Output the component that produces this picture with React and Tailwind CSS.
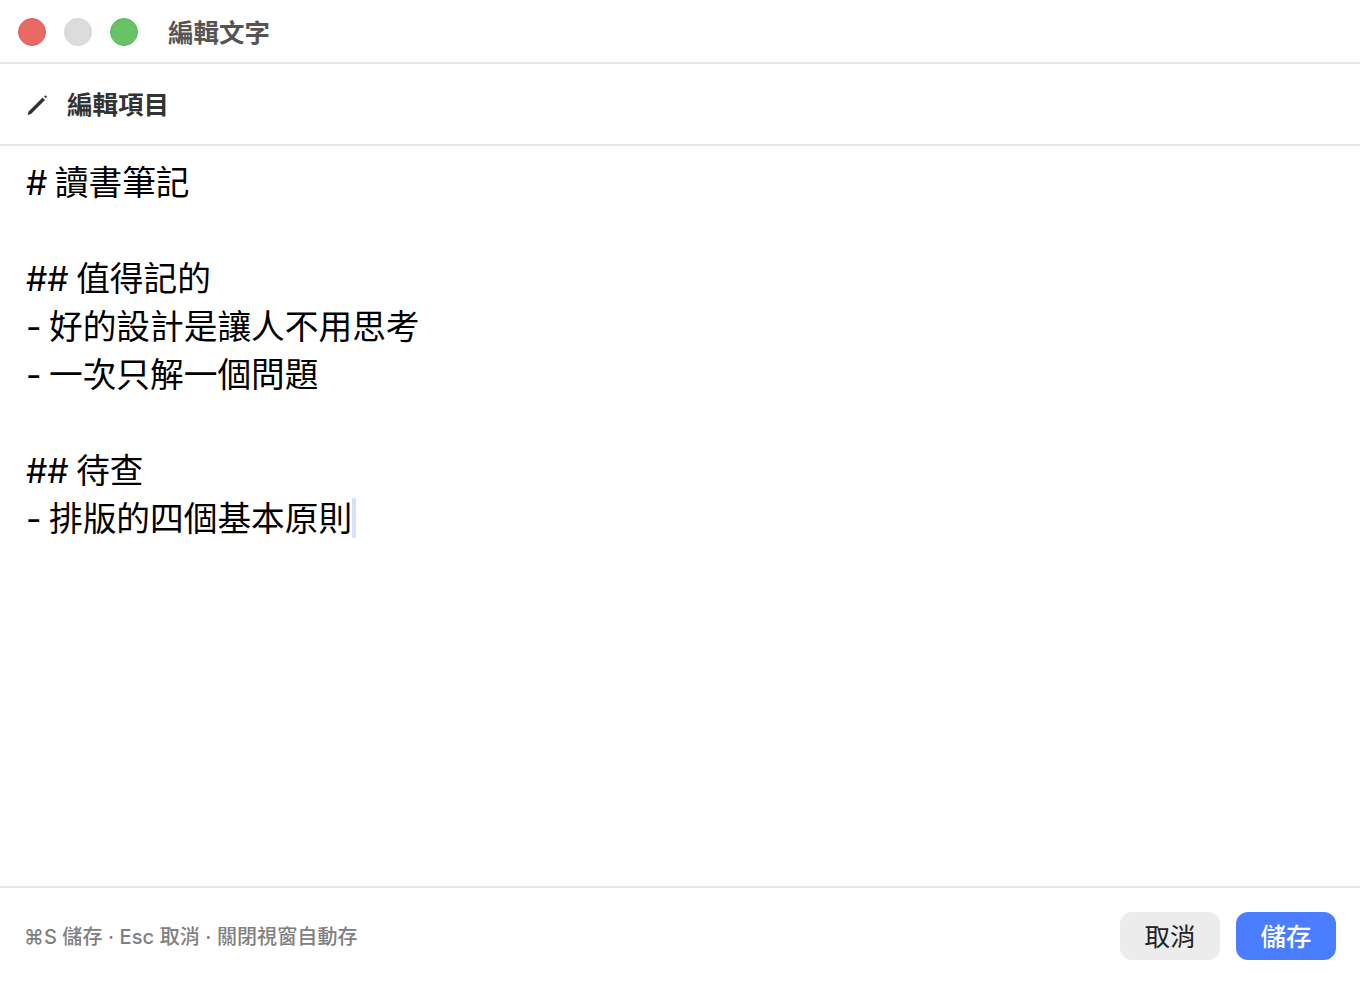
const FONT = "font-['Inter','Noto_Sans_CJK_TC',sans-serif]";

const lines = [
  "# 讀書筆記",
  "",
  "## 值得記的",
  "- 好的設計是讓人不用思考",
  "- 一次只解一個問題",
  "",
  "## 待查",
];

function PencilIcon() {
  return (
    <svg width="24" height="24" viewBox="0 0 24 24" fill="none" className="mt-[2px]">
      <path d="M2.5 22 L3.6 18.4 L17.6 4.6 L20 7 L6 20.9 Z" fill="#333333" />
      <path d="M19 3.4 L20.4 2.2 L22 3.8 L20.9 5.2 Z" fill="#333333" />
    </svg>
  );
}

export default function App() {
  return (
    <div className={`h-[984px] w-[1360px] flex flex-col bg-white overflow-hidden ${FONT}`}>
      {/* barra de título */}
      <div className="h-[64px] shrink-0 flex items-center border-b-2 border-[#e6e6e6] pl-[18px] pt-[2px]">
        <div className="flex gap-[18px]">
          <span className="w-[28px] h-[28px] rounded-full bg-[#e96a65] border border-[#de5f5a]" />
          <span className="w-[28px] h-[28px] rounded-full bg-[#dcdcdc] border border-[#d4d4d4]" />
          <span className="w-[28px] h-[28px] rounded-full bg-[#66c466] border border-[#5cb85c]" />
        </div>
        <span className="ml-[30px] pt-[2px] text-[25.5px] font-bold text-[#555555]">編輯文字</span>
      </div>

      {/* encabezado */}
      <div className="h-[82px] shrink-0 flex items-center border-b-2 border-[#e6e6e6] pl-[25px]">
        <PencilIcon />
        <span className="ml-[18px] pt-[2px] text-[25.5px] font-bold text-[#333333]">編輯項目</span>
      </div>

      {/* editor */}
      <div className="flex-1 pt-[12px] pl-[26px] text-[33.7px] leading-[50px] text-black [word-spacing:-2px]">
        {lines.map((line, i) => (
          <div key={i} className="h-[48px] whitespace-pre">
            {line}
          </div>
        ))}
        <div className="h-[48px] flex items-start whitespace-pre">
          - 排版的四個基本原則
          <span className="mt-[4px] w-[4px] h-[40px] bg-[#d5e0fb] rounded-[1px]" />
        </div>
      </div>

      {/* pie */}
      <div className="h-[98px] shrink-0 flex items-center justify-between border-t-2 border-[#e6e6e6] px-[24px]">
        <span className="pt-[2px] text-[20px] font-medium tracking-[0.1px] text-[#808080]">⌘S 儲存 · Esc 取消 · 關閉視窗自動存</span>
        <div className="flex gap-[16px]">
          <button className="w-[100px] h-[48px] pt-[2px] rounded-[12px] bg-[#ececec] text-[25.5px] text-[#222222]">取消</button>
          <button className="w-[100px] h-[48px] pt-[2px] rounded-[12px] bg-[#4a7dff] text-[25.5px] font-medium text-white">儲存</button>
        </div>
      </div>
    </div>
  );
}
